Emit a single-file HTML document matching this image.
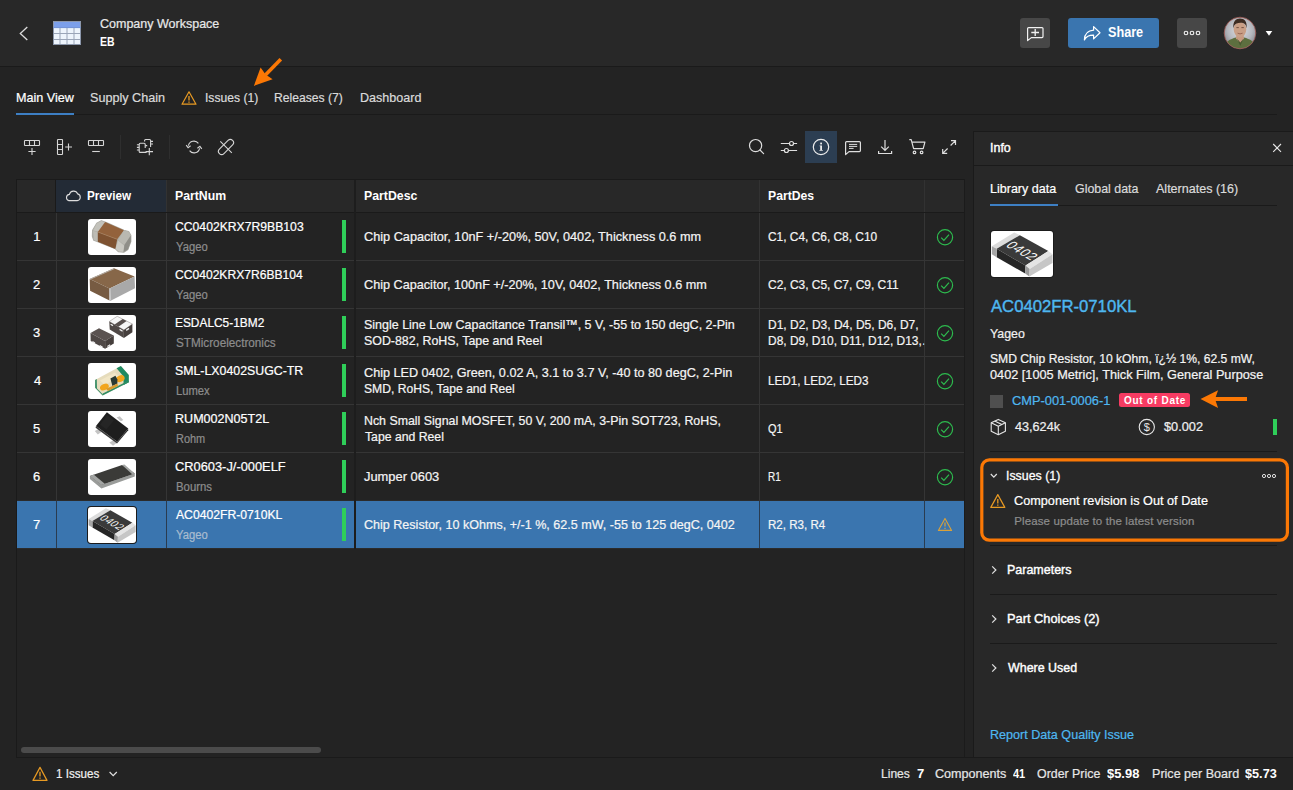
<!DOCTYPE html>
<html lang="en">
<head>
<meta charset="utf-8">
<title>Company Workspace - EB</title>
<style>
*{box-sizing:border-box;margin:0;padding:0}
html,body{width:1293px;height:790px;overflow:hidden;background:#232323}
body{font-family:"Liberation Sans",sans-serif;font-size:13px;color:#f3f3f3;position:relative}
.r{position:absolute}
.t{position:absolute;white-space:nowrap;line-height:16px;font-size:13px;transform-origin:0 0;-webkit-text-stroke:0.22px currentColor}
#ico{position:absolute;left:0;top:0;width:1293px;height:790px;overflow:hidden}
#ico text{font-family:"Liberation Sans",sans-serif}
</style>
</head>
<body>
<!-- header -->
<div class="r" style="left:0;top:0;width:1293px;height:66px;background:#282828"></div>
<div class="r" style="left:0;top:66px;width:1293px;height:1px;background:#1a1a1a"></div>
<div class="r" style="left:1020px;top:18px;width:30px;height:30px;border-radius:3px;background:#474747"></div>
<div class="r" style="left:1068px;top:18px;width:91px;height:30px;border-radius:3px;background:#3a75af"></div>
<div class="r" style="left:1177px;top:18px;width:30px;height:30px;border-radius:3px;background:#474747"></div>
<!-- tabs -->
<div class="r" style="left:16px;top:114px;width:1261px;height:1px;background:#1a1a1a"></div>
<div class="r" style="left:16px;top:113px;width:58px;height:2px;background:#3d7fc4"></div>
<!-- toolbar -->
<div class="r" style="left:120px;top:135px;width:1px;height:24px;background:#2e2e2e"></div>
<div class="r" style="left:169px;top:135px;width:1px;height:24px;background:#2e2e2e"></div>
<div class="r" style="left:805px;top:131px;width:32px;height:32px;background:#2c3e52"></div>
<!-- grid -->
<div class="r" style="left:16px;top:179px;width:949px;height:1px;background:#1a1a1a"></div>
<div class="r" style="left:16px;top:179px;width:1px;height:579px;background:#1a1a1a"></div>
<div class="r" style="left:17px;top:180px;width:947px;height:32px;background:#282828"></div>
<div class="r" style="left:56px;top:180px;width:110px;height:32px;background:#232b36"></div>
<div class="r" style="left:17px;top:212px;width:947px;height:1px;background:#1a1a1a"></div>
<div class="r" style="left:55px;top:180px;width:1px;height:32px;background:#1a1a1a"></div>
<div class="r" style="left:166px;top:180px;width:1px;height:32px;background:#323232"></div>
<div class="r" style="left:759px;top:180px;width:1px;height:32px;background:#323232"></div>
<div class="r" style="left:924px;top:180px;width:1px;height:32px;background:#323232"></div>
<div class="r" style="left:964px;top:179px;width:1px;height:579px;background:#1b1b1b"></div>
<!-- selected row -->
<div class="r" style="left:17px;top:501px;width:947px;height:47px;background:#3a75af"></div>
<!-- row lines -->
<div class="r" style="left:17px;top:260px;width:947px;height:1px;background:#353535"></div>
<div class="r" style="left:17px;top:308px;width:947px;height:1px;background:#353535"></div>
<div class="r" style="left:17px;top:356px;width:947px;height:1px;background:#353535"></div>
<div class="r" style="left:17px;top:404px;width:947px;height:1px;background:#353535"></div>
<div class="r" style="left:17px;top:452px;width:947px;height:1px;background:#353535"></div>
<div class="r" style="left:17px;top:500px;width:947px;height:1px;background:#2b2b2b"></div>
<div class="r" style="left:17px;top:548px;width:947px;height:1px;background:#2b2b2b"></div>
<!-- col lines -->
<div class="r" style="left:56px;top:213px;width:1px;height:288px;background:#353535"></div>
<div class="r" style="left:166px;top:213px;width:1px;height:288px;background:#353535"></div>
<div class="r" style="left:759px;top:213px;width:1px;height:288px;background:#353535"></div>
<div class="r" style="left:924px;top:213px;width:1px;height:288px;background:#353535"></div>
<div class="r" style="left:56px;top:501px;width:1px;height:47px;background:#2a3c50"></div>
<div class="r" style="left:166px;top:501px;width:1px;height:47px;background:#2a3c50"></div>
<div class="r" style="left:759px;top:501px;width:1px;height:47px;background:#2a3c50"></div>
<div class="r" style="left:924px;top:501px;width:1px;height:47px;background:#2a3c50"></div>
<div class="r" style="left:354px;top:180px;width:2px;height:369px;background:#1d1d1d"></div>
<!-- green bars -->
<div class="r" style="left:342px;top:220px;width:4px;height:33px;background:#2fce59"></div>
<div class="r" style="left:342px;top:268px;width:4px;height:33px;background:#2fce59"></div>
<div class="r" style="left:342px;top:316px;width:4px;height:33px;background:#2fce59"></div>
<div class="r" style="left:342px;top:364px;width:4px;height:33px;background:#2fce59"></div>
<div class="r" style="left:342px;top:412px;width:4px;height:33px;background:#2fce59"></div>
<div class="r" style="left:342px;top:460px;width:4px;height:33px;background:#2fce59"></div>
<div class="r" style="left:342px;top:508px;width:4px;height:33px;background:#2fce59"></div>
<!-- h scrollbar -->
<div class="r" style="left:21px;top:747px;width:300px;height:6px;border-radius:3px;background:#4b4b4b"></div>
<!-- panel -->
<div class="r" style="left:973px;top:131px;width:320px;height:626px;background:#282828;border-left:1px solid #1a1a1a;border-top:1px solid #1a1a1a"></div>
<div class="r" style="left:974px;top:165px;width:319px;height:1px;background:#1a1a1a"></div>
<div class="r" style="left:990px;top:205px;width:287px;height:1px;background:#1a1a1a"></div>
<div class="r" style="left:990px;top:204px;width:68px;height:2px;background:#3d7fc4"></div>
<div class="r" style="left:990px;top:395px;width:13px;height:13px;background:#4f4f4f"></div>
<div class="r" style="left:1119px;top:393px;width:71px;height:14px;border-radius:2.5px;background:#f73b62"></div>
<div class="r" style="left:1273px;top:419px;width:4px;height:16px;background:#2fce59"></div>
<div class="r" style="left:990px;top:451px;width:287px;height:1px;background:#1a1a1a"></div>
<div class="r" style="left:990px;top:545px;width:287px;height:1px;background:#1a1a1a"></div>
<div class="r" style="left:990px;top:594px;width:287px;height:1px;background:#1a1a1a"></div>
<div class="r" style="left:990px;top:643px;width:287px;height:1px;background:#1a1a1a"></div>
<!-- footer -->
<div class="r" style="left:16px;top:757px;width:1277px;height:1px;background:#1a1a1a"></div>
<svg id="ico" width="1293" height="790" viewBox="0 0 1293 790">
<defs>
<clipPath id="avc"><circle cx="1240" cy="33" r="15.6"/></clipPath>
<radialGradient id="avbg" cx="0.5" cy="0.4" r="0.65"><stop offset="0" stop-color="#dfe1e6"/><stop offset="0.6" stop-color="#b4b6bc"/><stop offset="1" stop-color="#7b7d84"/></radialGradient>
<clipPath id="th"><rect x="0" y="0" width="48" height="36" rx="3"/></clipPath>
</defs>
<!-- back chevron -->
<polyline points="27.3,27 20.3,33.5 27.3,40" fill="none" stroke="#dcdcdc" stroke-width="1.3"/>
<!-- table icon -->
<g>
<rect x="53" y="21" width="28" height="24" fill="#edf4fc"/>
<rect x="53" y="21" width="28" height="6.6" fill="#7b9fea"/>
<g stroke="#9aa5b8" stroke-width="1" fill="none">
<path d="M53,33.5H81M53,39.5H81M60,27.6V45M67,27.6V45M74,27.6V45"/>
<rect x="53.5" y="21.5" width="27" height="23" stroke="#8c97ab"/>
<path d="M53,27.6H81" stroke="#6f90d6"/>
</g>
</g>
<!-- comment plus -->
<path d="M1028.6,27.6H1042Q1043,27.6 1043,28.6V36.6Q1043,37.6 1042,37.6H1031.3L1027.6,40.6V28.6Q1027.6,27.6 1028.6,27.6Z" fill="none" stroke="#f2f2f2" stroke-width="1.2" stroke-linejoin="round"/>
<path d="M1031.3,32.5H1039M1035.2,28.9V36.1" stroke="#f2f2f2" stroke-width="1.3" fill="none"/>
<!-- share arrow -->
<path d="M1093.6,26.6L1100,32.7L1093.6,38.9V35.2C1089.2,35.1 1086.2,36.6 1084.4,39.9C1084.6,34.3 1088,30.6 1093.6,30.2Z" fill="none" stroke="#ffffff" stroke-width="1.2" stroke-linejoin="round"/>
<!-- more dots -->
<g fill="none" stroke="#f2f2f2" stroke-width="1.1"><circle cx="1186" cy="33" r="1.8"/><circle cx="1192" cy="33" r="1.8"/><circle cx="1198" cy="33" r="1.8"/></g>
<!-- avatar -->
<g clip-path="url(#avc)">
<rect x="1224" y="17" width="32" height="32" fill="url(#avbg)"/>
<path d="M1224,50C1224,42 1230,39 1236,37.5L1244,37.5C1250,39 1256,42 1256,50Z" fill="#5d6f3f"/>
<path d="M1236.6,34H1243.4L1244,38.5L1240.3,43.5L1236,38.5Z" fill="#c79a80"/>
<path d="M1237,38.5L1240.3,46L1243.6,38.5L1240.3,42.5Z" fill="#4a5a32"/>
<ellipse cx="1240" cy="29.6" rx="6.3" ry="7.6" fill="#c99f86"/>
<path d="M1233.4,28.5C1232.6,21.5 1236,18.6 1240,18.6C1244.4,18.6 1247.4,21.5 1246.6,28.5C1246.2,25.5 1245.4,23.8 1243.6,23.2C1241,22.6 1238.6,22.8 1236.6,23.4C1234.8,24 1233.8,25.8 1233.4,28.5Z" fill="#3d2c22"/>
<path d="M1236.4,27.6H1238.8M1241.4,27.6H1243.8" stroke="#6b4a3a" stroke-width="0.9"/>
<path d="M1237.6,33.2Q1240,34.6 1242.6,33.2" stroke="#8e5a4a" stroke-width="0.8" fill="none"/>
</g>
<circle cx="1240" cy="33" r="15.8" fill="none" stroke="#a8605a" stroke-width="0.8"/>
<polygon points="1265.7,31 1272.3,31 1269,35.8" fill="#ffffff"/>
<!-- orange arrow 1 -->
<g fill="#fb7805" stroke="none">
<path d="M280.8,59.2L265.4,75" stroke="#fb7805" stroke-width="3.6" fill="none"/>
<polygon points="253.9,85.9 260.6,67.4 265.6,74.6 272.6,79.3"/>
</g>
<!-- tab warning icon -->
<g fill="none" stroke="#e89a23" stroke-width="1.2" stroke-linejoin="round">
<path d="M189,91.8L196,104.2H182Z"/>
<path d="M189,96V100.4M189,101.6V102.8" stroke-width="1.3"/>
</g>
<!-- toolbar left icons -->
<g fill="none" stroke="#d6d6d6" stroke-width="1.1">
<rect x="24.5" y="140.5" width="15" height="5" rx="0.6"/>
<path d="M29.5,140.5V145.5M34.5,140.5V145.5"/>
<path d="M28.4,151.5H35.6M32,148V155"/>
<rect x="57.5" y="139.5" width="5" height="15" rx="0.6"/>
<path d="M57.5,144.5H62.5M57.5,149.5H62.5"/>
<path d="M65.2,147H72M68.5,143.5V150.6"/>
<rect x="88.5" y="140.5" width="15" height="5" rx="0.6"/>
<path d="M93.5,140.5V145.5M98.5,140.5V145.5"/>
<path d="M92.2,151.5H99.8"/>
<!-- component add -->
<path d="M146.6,152.4H140.2Q139.2,152.4 139.2,151.4V144.2Q139.2,143.2 140.2,143.2H144.2Q145.2,143.2 145.2,144.2V148"/>
<path d="M136.9,144.8H139.2M136.9,147.4H139.2M136.9,150H139.2"/>
<path d="M144.6,141.4V140.5Q144.6,139.5 145.6,139.5H149.6Q150.6,139.5 150.6,140.5V147"/>
<path d="M150.6,141.4H153M150.6,144H153M145.2,145.6H147.2"/>
<path d="M145.6,151.6H153M149.3,148V155.2"/>
<!-- refresh -->
<path d="M198.4,143.4A5.6,5.6 0 0 0 188.4,145.6"/>
<path d="M189.6,150.6A5.6,5.6 0 0 0 199.6,148.4"/>
<path d="M186.2,145.2L188.1,147.7L190.6,145.8"/>
<path d="M201.8,148.8L199.9,146.3L197.4,148.2"/>
<!-- unlink -->
<rect x="-3.2" y="-9.3" width="6.4" height="18.6" rx="3.2" transform="translate(226,147) rotate(45)"/>
<path d="M220.3,141.3L231.8,152.8"/>
</g>
<!-- toolbar right icons -->
<g fill="none" stroke="#dedede" stroke-width="1.2">
<circle cx="755.6" cy="145.6" r="6.1"/>
<path d="M760,150L763.6,153.6" stroke-linecap="round"/>
<path d="M780.8,143.5H789.4M793.6,143.5H797.1M780.8,150.5H784.3M788.5,150.5H797.1"/>
<circle cx="791.5" cy="143.5" r="2"/><circle cx="786.4" cy="150.5" r="2"/>
<circle cx="821" cy="147" r="7.7" stroke="#ececec"/>
<!-- comment -->
<path d="M846.6,141.6H859.4Q860.4,141.6 860.4,142.6V150.6Q860.4,151.6 859.4,151.6H849L845.6,154.6V142.6Q845.6,141.6 846.6,141.6Z" stroke-linejoin="round"/>
<path d="M849,144.4H857.2M849,146.4H857.2M849,148.4H853.6" stroke-width="1"/>
<!-- download -->
<path d="M885,140.1V150.2M881.2,146.6L885,150.4L888.8,146.6"/>
<path d="M878.6,151V153.5H891.6V151"/>
<!-- cart -->
<path d="M909.3,139.6H911.2L913.6,148.6H923.2L924.9,142.2H912" stroke-linejoin="round"/>
<circle cx="914.5" cy="152.4" r="1.3"/><circle cx="921.6" cy="152.4" r="1.3"/>
<!-- expand -->
<path d="M950.6,145.5L955.5,140.6M951,140.6H955.5V145.1"/>
<path d="M947.6,148.5L942.7,153.4M947.2,153.4H942.7V148.9"/>
</g>
<!-- info i -->
<g fill="#ececec"><rect x="820.2" y="142.6" width="1.8" height="1.8"/><path d="M819.6,145.4H822V150H822.8V150.8H819.4V150H820.2V146.2H819.6Z"/></g>
<!-- cloud -->
<path d="M68.6,200.6H77.2A3.4,3.4 0 0 0 77.6,193.9A4.3,4.3 0 0 0 69.4,194.4A3.2,3.2 0 0 0 68.6,200.6Z" fill="none" stroke="#dedede" stroke-width="1.1"/>
<!-- status icons -->
<g fill="none" stroke="#2dbb4e" stroke-width="1.2">
<g id="ck"><circle cx="945" cy="237.2" r="7.6"/><path d="M941.2,237.6L943.9,240.3L949,234.6"/></g>
<g transform="translate(0,48)"><circle cx="945" cy="237.2" r="7.6"/><path d="M941.2,237.6L943.9,240.3L949,234.6"/></g>
<g transform="translate(0,96)"><circle cx="945" cy="237.2" r="7.6"/><path d="M941.2,237.6L943.9,240.3L949,234.6"/></g>
<g transform="translate(0,144)"><circle cx="945" cy="237.2" r="7.6"/><path d="M941.2,237.6L943.9,240.3L949,234.6"/></g>
<g transform="translate(0,192)"><circle cx="945" cy="237.2" r="7.6"/><path d="M941.2,237.6L943.9,240.3L949,234.6"/></g>
<g transform="translate(0,240)"><circle cx="945" cy="237.2" r="7.6"/><path d="M941.2,237.6L943.9,240.3L949,234.6"/></g>
</g>
<g fill="none" stroke="#d9a13a" stroke-width="1.1" stroke-linejoin="round">
<path d="M945,518.4L951.6,530.4H938.4Z"/>
<path d="M945,522.6V526.6M945,527.8V528.9" stroke-width="1.2"/>
</g>
<!--THUMBS_BEGIN-->
<!-- thumbnails -->
<g transform="translate(88,219)" clip-path="url(#th)">
<rect width="48" height="36" fill="#ffffff"/>
<path d="M4.6,11.4L8.8,4.2L13.4,1.8L18.3,3.5L35.9,11.4L40.6,12.6L42.8,16.2V22.6L39.9,30.4L35.7,33.2L30.6,32.7L27.4,29.8L9.8,22.6L5.8,21.2L4.4,17.3Z" fill="#aeada6" stroke="#aeada6" stroke-width="1.2" stroke-linejoin="round"/>
<path d="M8.8,4.6L13.4,2L17.6,3.4L10.4,12.6L5.2,11.6Z" fill="#c3c2bb"/>
<path d="M5,12L9.8,13V22.4L6,21Z" fill="#bdbcb5"/>
<polygon points="17.1,2.9 35.9,11.2 29.2,20.3 9.8,13" fill="#93623c"/>
<polygon points="9.8,13 29.2,20.3 27.4,30 9.8,22.8" fill="#7e5231"/>
<path d="M9.8,13L29.2,20.3" stroke="#b08a66" stroke-width="0.6"/>
<path d="M35.9,11.4L40.6,12.6L42.8,16.2L36.4,26L30.2,21Z" fill="#b9b8b1"/>
<path d="M30,21.4L36.2,26.4L35.4,32.8L30.8,32.4L27.6,29.8Z" fill="#c9c8c1"/>
<path d="M36.4,26L42.8,16.6V22.6L39.9,30.4L35.6,33Z" fill="#8f8e88"/>
</g>
<g transform="translate(88,267)" clip-path="url(#th)">
<rect width="48" height="36" fill="#ffffff"/>
<polygon points="1.7,12.1 26,1.2 46.6,9.5 21.5,21.6" fill="#876749"/>
<polygon points="1.7,12.1 21.5,21.6 21.5,33.6 2.1,23.7" fill="#775b42"/>
<polygon points="21.5,21.6 46.6,9.5 47,21.3 22.1,33.9" fill="#a9a9a9"/>
<polygon points="21.5,21.6 22.6,21.2 23.1,33.4 21.5,33.6" fill="#c9c9c9"/>
<polygon points="1.7,12.1 26,1.2 27.2,1.7 2.6,12.6" fill="#b5b0aa"/>
</g>
<g transform="translate(88,315)" clip-path="url(#th)">
<rect width="48" height="36" fill="#ffffff"/>
<polygon points="21.3,6.5 29.2,1.3 44.4,9 35.9,15" fill="#f6f6f6" stroke="#8c8684" stroke-width="0.5"/>
<polygon points="26.6,9.6 34.7,4.1 38.6,6.1 30.4,11.8" fill="#58504e"/>
<polygon points="21.3,6.5 35.9,15 35.9,22.9 21.7,14.4" fill="#4f4846"/>
<polygon points="35.9,15 44.4,9 44.4,17.2 35.9,22.9" fill="#463f3d"/>
<path d="M22.6,9.2L25,10.6M31.6,14.4L34.6,16.2M38.2,15.4L41,13.4" stroke="#efefef" stroke-width="1.3"/>
<polygon points="2.5,18.1 11,13.2 25.8,20.5 17.1,26" fill="#5b5351"/>
<polygon points="2.5,18.1 17.1,26 17.1,33.8 2.7,26" fill="#4f4846"/>
<polygon points="17.1,26 25.8,20.5 25.8,28.6 17.1,33.8" fill="#453e3c"/>
<path d="M4.4,26.6L7,28M11.8,30.6L14.6,32.2M19.4,31.6L22.2,29.8" stroke="#efefef" stroke-width="1.2"/>
</g>
<g transform="translate(88,363)" clip-path="url(#th)">
<rect width="48" height="36" fill="#ffffff"/>
<polygon points="7.1,16.9 32.9,2.9 40.8,12 40.8,19.3 14.6,32.6 7.1,24.8" fill="#e6dcbc"/>
<polygon points="28.6,5.2 32.9,2.9 40.8,12 40.8,19.3 35.6,22 35.4,13.2" fill="#1f8a62"/>
<polygon points="7.1,16.9 8.8,16 9,25.4 15,31.4 14.6,32.6 7.1,24.8" fill="#3c8f6a"/>
<polygon points="14.6,32.6 40.8,19.3 40.8,17.4 14.8,30.4" fill="#2e8c64"/>
<polygon points="12,17.6 27,9.6 31,14 16.6,22" fill="#f1e6c6"/>
<ellipse cx="16.4" cy="24" rx="4.6" ry="3" fill="#f2a51c" transform="rotate(-25 16.4 24)"/>
<ellipse cx="32.4" cy="15.6" rx="4.4" ry="3.2" fill="#f2a51c" transform="rotate(-25 32.4 15.6)"/>
<polygon points="22.4,15.4 27.4,12.8 29.4,16.4 29.4,20.4 24.4,23" fill="#2a3a32"/>
<polygon points="18,25.8 24.4,23 29.4,20.4 30,23 20,28" fill="#d89a2a"/>
</g>
<g transform="translate(88,411)" clip-path="url(#th)">
<rect width="48" height="36" fill="#ffffff"/>
<polygon points="6.8,19.9 10.4,18.1 13.4,21.1 9.8,23.5" fill="#c4c4c4"/>
<polygon points="21.3,31.4 25,29.6 28.6,32 25,34.7" fill="#c4c4c4"/>
<polygon points="28.6,6.5 31.7,5.3 35.3,9 32.9,10.2" fill="#c4c4c4"/>
<polygon points="8,15 29.2,30.8 29,32.6 7.6,16.8" fill="#3a3a3a"/>
<polygon points="29.2,30.8 40.2,17.5 40.2,19.2 29,32.6" fill="#2a2a2a"/>
<polygon points="8,15 18.9,1.3 40.2,17.5 29.2,30.8" fill="#1e1e1e"/>
<polygon points="12,13.6 19.4,4.2 26,9.2 18.4,18.4" fill="#252525"/>
</g>
<g transform="translate(88,459)" clip-path="url(#th)">
<rect width="48" height="36" fill="#ffffff"/>
<polygon points="1.9,16.9 13.4,26 46.8,14.4 46.8,17.5 13.4,29.6 1.9,19.9" fill="#9a9c9a"/>
<polygon points="1.9,16.9 34.1,5.9 46.8,14.4 13.4,26" fill="#3b3b38"/>
<polygon points="1.9,16.9 5.6,15.6 16.8,24.8 13.4,26" fill="#a3a5a3"/>
<polygon points="34.1,5.9 36.4,5.6 46.8,14.4 44.2,15.3" fill="#a3a5a3"/>
</g>
<rect x="87" y="506" width="50" height="38" rx="4" fill="#1b1b1b"/>
<g transform="translate(88,507)" clip-path="url(#th)">
<rect width="48" height="36" fill="#ffffff"/>
<g transform="scale(0.774,0.7826)">
<use href="#chip0402"/>
</g>
</g>
<rect x="990" y="230" width="64" height="48" rx="4" fill="#1b1b1b"/>
<rect x="991" y="231" width="62" height="46" rx="3" fill="#ffffff"/>
<g transform="translate(991,231)">
<g id="chip0402">
<polygon points="0.8,15.2 23.2,1.5 28.9,4.2 5.7,17.8" fill="#dcdcdc"/>
<polygon points="5.7,17.8 28.9,4.2 57.3,20.1 34.5,34.5" fill="#3a3a3a"/>
<polygon points="34.5,34.5 57.3,20.1 61.5,23.2 38.7,38" fill="#e4e4e4"/>
<polygon points="5.7,17.8 34.5,34.5 34.2,42.5 5.7,26.2" fill="#262626"/>
<polygon points="0.8,15.2 5.7,17.8 5.7,26.2 0.8,23.2" fill="#a6a6a6"/>
<polygon points="34.5,34.5 38.7,38 38.3,45.6 34.2,42.5" fill="#9a9a9a"/>
<polygon points="38.7,38 61.5,23.2 61.5,31.9 38.3,45.6" fill="#c6c6c6"/>
<text transform="translate(31.4,19.8) rotate(29.5) skewX(-28)" x="0" y="4.4" font-size="12.5" text-anchor="middle" fill="#ffffff" opacity="0.98" letter-spacing="0.7">0402</text>
</g>
</g>
<!--THUMBS_END-->
<!-- panel icons -->
<path d="M1273.2,144L1281,151.8M1281,144L1273.2,151.8" stroke="#e6e6e6" stroke-width="1.1" fill="none"/>
<!-- arrow 2 -->
<path d="M1247,399H1214" stroke="#fb7805" stroke-width="4" fill="none"/>
<polygon points="1200.5,398.9 1218.1,390.2 1215,398.9 1218.1,407.9" fill="#fb7805"/>
<!-- box icon -->
<g fill="none" stroke="#e6e6e6" stroke-width="1.1" stroke-linejoin="round">
<path d="M998.3,419.4L1005.4,422.8V431.2L998.3,434.7L991.2,431.2V422.8Z"/>
<path d="M991.2,422.8L998.3,426.3L1005.4,422.8M998.3,426.3V434.7M994.7,421.1L1001.8,424.6"/>
<circle cx="1146.8" cy="427" r="7.6"/>
</g>
<text x="1146.8" y="431" font-size="11" text-anchor="middle" fill="#e6e6e6">$</text>
<!-- issue box -->
<rect x="981.8" y="459.9" width="305.6" height="80.3" rx="7.5" fill="none" stroke="#fb7805" stroke-width="3.2"/>
<path d="M990.8,474L993.8,477.2L996.8,474" fill="none" stroke="#e0e0e0" stroke-width="1.2"/>
<g fill="none" stroke="#e0e0e0" stroke-width="1"><circle cx="1264" cy="476" r="1.6"/><circle cx="1269" cy="476" r="1.6"/><circle cx="1274" cy="476" r="1.6"/></g>
<g fill="none" stroke="#e89a23" stroke-width="1.2" stroke-linejoin="round">
<path d="M997.8,494.6L1004.8,507.4H990.8Z"/>
<path d="M997.8,499V503.4M997.8,504.6V505.8" stroke-width="1.3"/>
</g>
<g fill="none" stroke="#e0e0e0" stroke-width="1.2">
<path d="M992.2,566.3L995.9,570L992.2,573.7"/>
<path d="M992.2,615.3L995.9,619L992.2,622.7"/>
<path d="M992.2,664.3L995.9,668L992.2,671.7"/>
</g>
<!-- footer -->
<g fill="none" stroke="#e89a23" stroke-width="1.2" stroke-linejoin="round">
<path d="M40,767.4L47,780.4H33Z"/>
<path d="M40,771.8V776.4M40,777.6V778.8" stroke-width="1.3"/>
</g>
<path d="M109.6,772L113.2,775.6L116.8,772" fill="none" stroke="#e0e0e0" stroke-width="1.2"/>

</svg>
<span class="t" style="left:99.7px;top:15.9px;color:#e8e8e8;transform:scaleX(0.962);">Company Workspace</span>
<span class="t" style="left:99.7px;top:34.1px;font-weight:bold;-webkit-text-stroke:0;color:#ffffff;transform:scaleX(0.806);">EB</span>
<span class="t" style="left:1107.8px;top:24.3px;font-size:14px;font-weight:bold;-webkit-text-stroke:0;color:#ffffff;transform:scaleX(0.903);">Share</span>
<span class="t" style="left:16.2px;top:89.5px;color:#ffffff;transform:scaleX(0.970);">Main View</span>
<span class="t" style="left:90.3px;top:89.5px;color:#dadada;transform:scaleX(0.970);">Supply Chain</span>
<span class="t" style="left:204.8px;top:89.5px;color:#dadada;transform:scaleX(0.932);">Issues (1)</span>
<span class="t" style="left:274.3px;top:89.5px;color:#dadada;transform:scaleX(0.934);">Releases (7)</span>
<span class="t" style="left:360.1px;top:89.5px;color:#dadada;transform:scaleX(0.965);">Dashboard</span>
<span class="t" style="left:87.4px;top:187.8px;font-weight:bold;-webkit-text-stroke:0;color:#ffffff;transform:scaleX(0.898);">Preview</span>
<span class="t" style="left:175.2px;top:187.8px;font-weight:bold;-webkit-text-stroke:0;color:#ffffff;transform:scaleX(0.944);">PartNum</span>
<span class="t" style="left:364.2px;top:187.8px;font-weight:bold;-webkit-text-stroke:0;color:#ffffff;transform:scaleX(0.946);">PartDesc</span>
<span class="t" style="left:768.3px;top:187.8px;font-weight:bold;-webkit-text-stroke:0;color:#ffffff;transform:scaleX(0.939);">PartDes</span>
<span class="t" style="left:33.2px;top:228.8px;color:#ffffff;width:7px;text-align:center;">1</span>
<span class="t" style="left:175.3px;top:218.8px;color:#ffffff;transform:scaleX(0.937);">CC0402KRX7R9BB103</span>
<span class="t" style="left:175.5px;top:239.1px;font-size:12px;color:#8c8c8c;transform:scaleX(0.938);">Yageo</span>
<span class="t" style="left:364.4px;top:228.9px;color:#f4f4f4;transform:scaleX(0.977);">Chip Capacitor, 10nF +/-20%, 50V, 0402, Thickness 0.6 mm</span>
<span class="t" style="left:768.3px;top:228.9px;color:#f4f4f4;transform:scaleX(0.916);">C1, C4, C6, C8, C10</span>
<span class="t" style="left:33.0px;top:276.8px;color:#ffffff;width:7px;text-align:center;">2</span>
<span class="t" style="left:175.3px;top:266.8px;color:#ffffff;transform:scaleX(0.930);">CC0402KRX7R6BB104</span>
<span class="t" style="left:175.5px;top:287.1px;font-size:12px;color:#8c8c8c;transform:scaleX(0.938);">Yageo</span>
<span class="t" style="left:364.4px;top:276.9px;color:#f4f4f4;transform:scaleX(0.973);">Chip Capacitor, 100nF +/-20%, 10V, 0402, Thickness 0.6 mm</span>
<span class="t" style="left:768.3px;top:276.9px;color:#f4f4f4;transform:scaleX(0.919);">C2, C3, C5, C7, C9, C11</span>
<span class="t" style="left:33.0px;top:324.8px;color:#ffffff;width:7px;text-align:center;">3</span>
<span class="t" style="left:175.3px;top:314.8px;color:#ffffff;transform:scaleX(0.915);">ESDALC5-1BM2</span>
<span class="t" style="left:175.5px;top:335.1px;font-size:12px;color:#8c8c8c;transform:scaleX(0.977);">STMicroelectronics</span>
<span class="t" style="left:364.4px;top:316.8px;color:#f4f4f4;transform:scaleX(0.960);">Single Line Low Capacitance Transil™, 5 V, -55 to 150 degC, 2-Pin</span>
<span class="t" style="left:364.4px;top:332.9px;color:#f4f4f4;transform:scaleX(0.953);">SOD-882, RoHS, Tape and Reel</span>
<span class="t" style="left:768.3px;top:316.8px;color:#f4f4f4;transform:scaleX(0.922);">D1, D2, D3, D4, D5, D6, D7,</span>
<span class="t" style="left:768.3px;top:332.9px;color:#f4f4f4;transform:scaleX(0.919);width:169.5px;overflow:hidden;">D8, D9, D10, D11, D12, D13,…</span>
<span class="t" style="left:34.0px;top:372.8px;color:#ffffff;width:7px;text-align:center;">4</span>
<span class="t" style="left:175.3px;top:362.8px;color:#ffffff;transform:scaleX(0.949);">SML-LX0402SUGC-TR</span>
<span class="t" style="left:175.5px;top:383.1px;font-size:12px;color:#8c8c8c;transform:scaleX(0.936);">Lumex</span>
<span class="t" style="left:364.4px;top:364.8px;color:#f4f4f4;transform:scaleX(0.972);">Chip LED 0402, Green, 0.02 A, 3.1 to 3.7 V, -40 to 80 degC, 2-Pin</span>
<span class="t" style="left:364.4px;top:380.9px;color:#f4f4f4;transform:scaleX(0.932);">SMD, RoHS, Tape and Reel</span>
<span class="t" style="left:768.3px;top:372.9px;color:#f4f4f4;transform:scaleX(0.897);">LED1, LED2, LED3</span>
<span class="t" style="left:33.0px;top:420.8px;color:#ffffff;width:7px;text-align:center;">5</span>
<span class="t" style="left:175.3px;top:410.8px;color:#ffffff;transform:scaleX(0.966);">RUM002N05T2L</span>
<span class="t" style="left:175.5px;top:431.1px;font-size:12px;color:#8c8c8c;transform:scaleX(0.912);">Rohm</span>
<span class="t" style="left:364.4px;top:412.8px;color:#f4f4f4;transform:scaleX(0.951);">Nch Small Signal MOSFET, 50 V, 200 mA, 3-Pin SOT723, RoHS,</span>
<span class="t" style="left:365.3px;top:428.9px;color:#f4f4f4;transform:scaleX(0.941);">Tape and Reel</span>
<span class="t" style="left:768.3px;top:420.9px;color:#f4f4f4;transform:scaleX(0.847);">Q1</span>
<span class="t" style="left:33.0px;top:468.8px;color:#ffffff;width:7px;text-align:center;">6</span>
<span class="t" style="left:175.3px;top:458.8px;color:#ffffff;transform:scaleX(0.988);">CR0603-J/-000ELF</span>
<span class="t" style="left:175.5px;top:479.1px;font-size:12px;color:#8c8c8c;transform:scaleX(0.947);">Bourns</span>
<span class="t" style="left:364.4px;top:468.9px;color:#f4f4f4;transform:scaleX(0.992);">Jumper 0603</span>
<span class="t" style="left:768.3px;top:468.9px;color:#f4f4f4;transform:scaleX(0.765);">R1</span>
<span class="t" style="left:33.0px;top:516.8px;color:#ffffff;width:7px;text-align:center;">7</span>
<span class="t" style="left:176.2px;top:506.8px;color:#ffffff;transform:scaleX(0.937);">AC0402FR-0710KL</span>
<span class="t" style="left:175.5px;top:527.1px;font-size:12px;color:#a9bccf;transform:scaleX(0.938);">Yageo</span>
<span class="t" style="left:364.4px;top:516.9px;color:#f4f4f4;transform:scaleX(0.965);">Chip Resistor, 10 kOhms, +/-1 %, 62.5 mW, -55 to 125 degC, 0402</span>
<span class="t" style="left:768.3px;top:516.9px;color:#f4f4f4;transform:scaleX(0.891);">R2, R3, R4</span>
<span class="t" style="left:990.4px;top:139.5px;color:#ffffff;transform:scaleX(0.959);-webkit-text-stroke:0.4px #fff;">Info</span>
<span class="t" style="left:990.4px;top:180.7px;color:#ffffff;transform:scaleX(0.964);">Library data</span>
<span class="t" style="left:1074.6px;top:180.7px;color:#dadada;transform:scaleX(0.954);">Global data</span>
<span class="t" style="left:1156.2px;top:180.7px;color:#dadada;transform:scaleX(0.964);">Alternates (16)</span>
<span class="t" style="left:990.9px;top:299.3px;font-size:17px;color:#4eb7f0;transform:scaleX(0.981);-webkit-text-stroke:0.4px #4eb7f0;">AC0402FR-0710KL</span>
<span class="t" style="left:990.1px;top:325.5px;color:#f0f0f0;transform:scaleX(0.951);">Yageo</span>
<span class="t" style="left:990.2px;top:351.2px;color:#f4f4f4;transform:scaleX(0.933);">SMD Chip Resistor, 10 kOhm, ï¿½ 1%, 62.5 mW,</span>
<span class="t" style="left:990.2px;top:366.7px;color:#f4f4f4;transform:scaleX(0.978);">0402 [1005 Metric], Thick Film, General Purpose</span>
<span class="t" style="left:1012.2px;top:393.2px;color:#4eb7f0;transform:scaleX(0.987);">CMP-001-0006-1</span>
<span class="t" style="left:1123.9px;top:392.8px;font-size:10px;font-weight:bold;-webkit-text-stroke:0;color:#ffffff;letter-spacing:0.76px;">Out of Date</span>
<span class="t" style="left:1015.3px;top:418.8px;color:#f0f0f0;transform:scaleX(0.973);">43,624k</span>
<span class="t" style="left:1163.8px;top:418.8px;color:#f0f0f0;transform:scaleX(0.980);">$0.002</span>
<span class="t" style="left:1005.5px;top:467.5px;color:#ffffff;transform:scaleX(0.951);-webkit-text-stroke:0.3px #fff;">Issues (1)</span>
<span class="t" style="left:1014.3px;top:492.6px;color:#ffffff;transform:scaleX(0.976);">Component revision is Out of Date</span>
<span class="t" style="left:1014.3px;top:512.6px;font-size:11.5px;color:#8c8c8c;letter-spacing:0.11px;">Please update to the latest version</span>
<span class="t" style="left:1006.5px;top:562.2px;color:#ffffff;transform:scaleX(0.960);-webkit-text-stroke:0.4px #fff;">Parameters</span>
<span class="t" style="left:1006.5px;top:611.4px;color:#ffffff;transform:scaleX(0.986);-webkit-text-stroke:0.4px #fff;">Part Choices (2)</span>
<span class="t" style="left:1007.5px;top:660.0px;color:#ffffff;transform:scaleX(0.956);-webkit-text-stroke:0.4px #fff;">Where Used</span>
<span class="t" style="left:989.9px;top:726.5px;color:#4eb7f0;transform:scaleX(0.968);">Report Data Quality Issue</span>
<span class="t" style="left:56.4px;top:765.7px;color:#f0f0f0;transform:scaleX(0.894);">1 Issues</span>
<span class="t" style="left:881.2px;top:765.5px;color:#e6e6e6;transform:scaleX(0.929);">Lines</span>
<span class="t" style="left:917.0px;top:765.5px;font-weight:bold;-webkit-text-stroke:0;color:#ffffff;">7</span>
<span class="t" style="left:935.3px;top:765.5px;color:#e6e6e6;transform:scaleX(0.968);">Components</span>
<span class="t" style="left:1012.6px;top:765.5px;font-weight:bold;-webkit-text-stroke:0;color:#ffffff;transform:scaleX(0.847);">41</span>
<span class="t" style="left:1037.2px;top:765.5px;color:#e6e6e6;transform:scaleX(0.952);">Order Price</span>
<span class="t" style="left:1107.1px;top:765.5px;font-weight:bold;-webkit-text-stroke:0;color:#ffffff;transform:scaleX(0.994);">$5.98</span>
<span class="t" style="left:1151.7px;top:765.5px;color:#e6e6e6;transform:scaleX(0.966);">Price per Board</span>
<span class="t" style="left:1244.7px;top:765.5px;font-weight:bold;-webkit-text-stroke:0;color:#ffffff;transform:scaleX(0.976);">$5.73</span>
</body>
</html>
